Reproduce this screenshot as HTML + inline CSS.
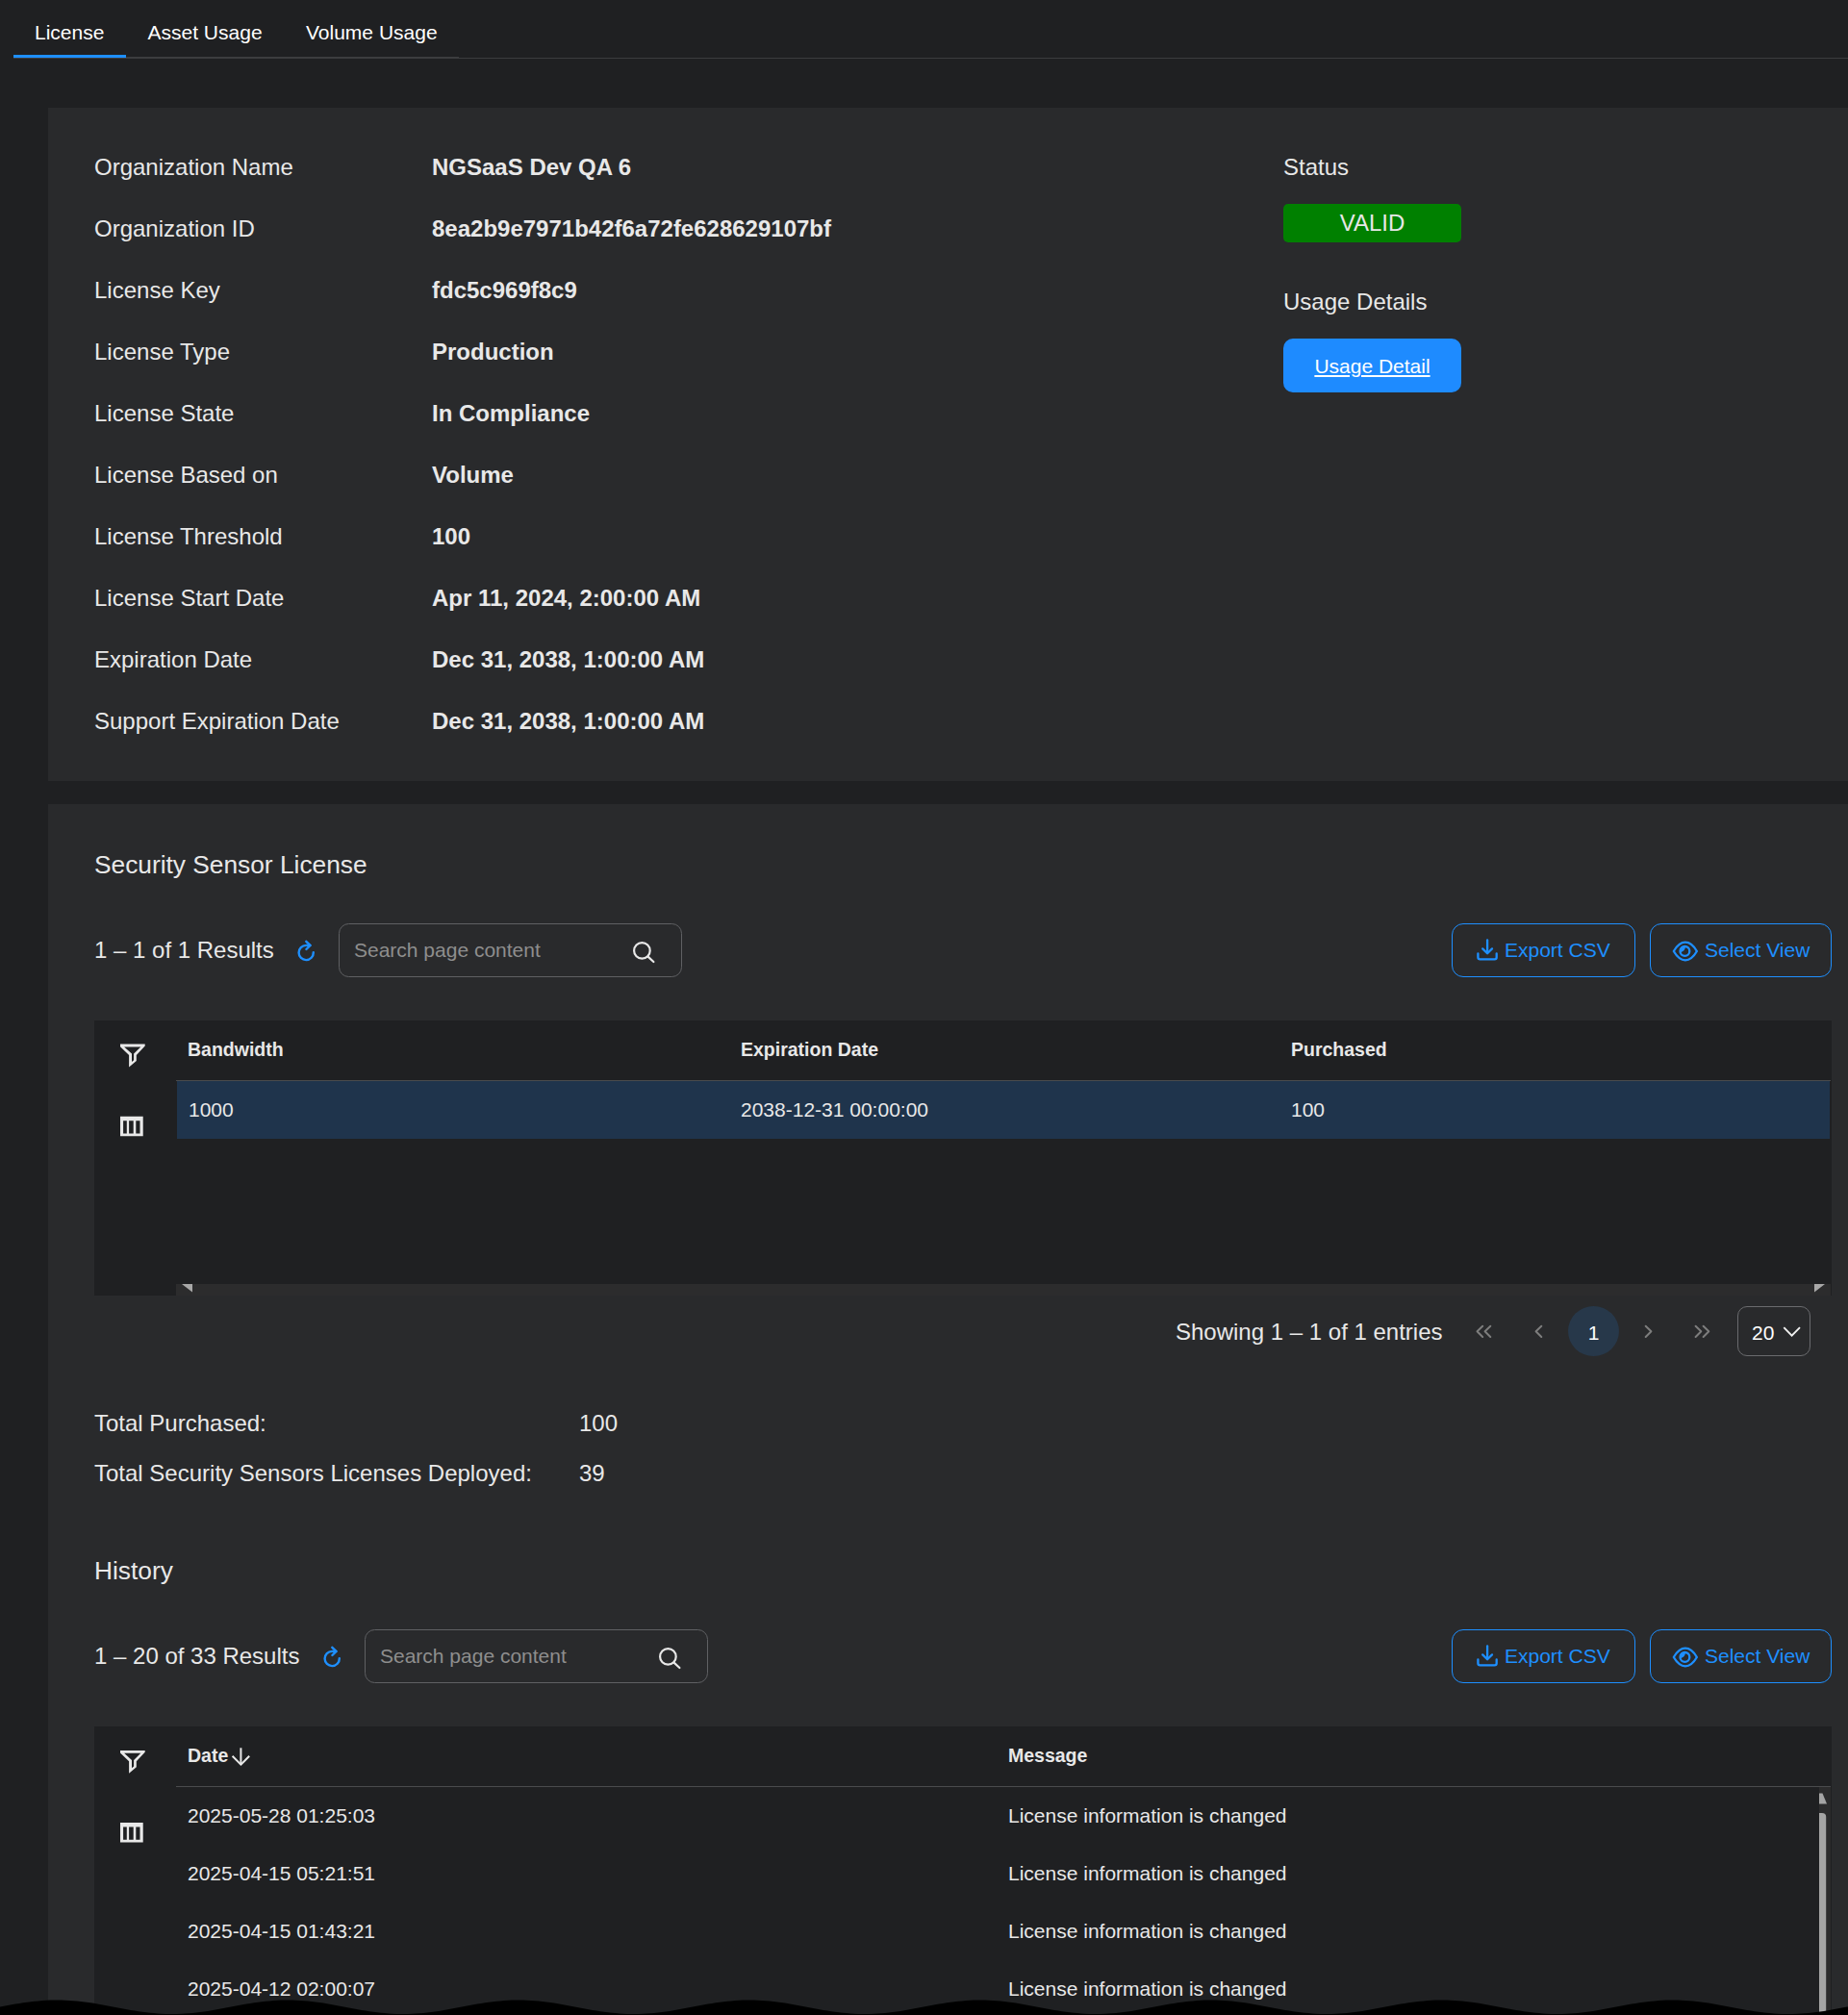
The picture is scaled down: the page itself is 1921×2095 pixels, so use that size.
<!DOCTYPE html>
<html><head><meta charset="utf-8">
<style>
*{box-sizing:border-box;margin:0;padding:0}
html,body{width:1921px;height:2095px;overflow:hidden;background:#1f2022;font-family:"Liberation Sans",sans-serif;color:#e6e6e6}
.abs{position:absolute}
.t{position:absolute;white-space:nowrap;line-height:1}
.tab{font-size:21px;color:#fff}
.card{position:absolute;background:#292a2c}
.lbl{font-size:24px;color:#e8e8e8}
.val{font-size:24px;font-weight:bold;color:#e8e8e8}
.h2{font-size:26.3px;color:#e8e8e8}
.res{font-size:24px;color:#e8e8e8}
.search{position:absolute;width:357px;height:56px;border:1.5px solid #5f6063;border-radius:10.5px}
.ph{position:absolute;font-size:21px;color:#8e8e8e;line-height:1;white-space:nowrap}
.btn{position:absolute;height:56px;border:1.8px solid #1e8fff;border-radius:12px}
.btxt{position:absolute;font-size:21px;color:#1e8fff;line-height:1;white-space:nowrap}
.tbl{position:absolute;background:#1f2022}
.th{font-size:19.5px;font-weight:bold;color:#e8e8e8}
.td{font-size:21px;color:#e8e8e8}
svg.ov{position:absolute;left:0;top:0}
</style></head><body>
<!-- tabs -->
<div class="t tab" style="left:36px;top:23px">License</div>
<div class="t tab" style="left:153.5px;top:23px">Asset Usage</div>
<div class="t tab" style="left:318px;top:23px">Volume Usage</div>
<div class="abs" style="left:14px;top:59px;width:463px;height:2px;background:#3c3d3f"></div>
<div class="abs" style="left:477px;top:60px;width:1444px;height:1px;background:#3c3d3f"></div>
<div class="abs" style="left:14px;top:57px;width:117px;height:3px;background:#1e8fff"></div>

<!-- card 1 -->
<div class="card" style="left:50px;top:112px;width:1871px;height:700px"></div>
<div class="t lbl" style="left:98px;top:162px">Organization Name</div>
<div class="t lbl" style="left:98px;top:226px">Organization ID</div>
<div class="t lbl" style="left:98px;top:290px">License Key</div>
<div class="t lbl" style="left:98px;top:354px">License Type</div>
<div class="t lbl" style="left:98px;top:418px">License State</div>
<div class="t lbl" style="left:98px;top:482px">License Based on</div>
<div class="t lbl" style="left:98px;top:546px">License Threshold</div>
<div class="t lbl" style="left:98px;top:610px">License Start Date</div>
<div class="t lbl" style="left:98px;top:674px">Expiration Date</div>
<div class="t lbl" style="left:98px;top:738px">Support Expiration Date</div>

<div class="t val" style="left:449px;top:162px">NGSaaS Dev QA 6</div>
<div class="t val" style="left:449px;top:226px">8ea2b9e7971b42f6a72fe628629107bf</div>
<div class="t val" style="left:449px;top:290px">fdc5c969f8c9</div>
<div class="t val" style="left:449px;top:354px">Production</div>
<div class="t val" style="left:449px;top:418px">In Compliance</div>
<div class="t val" style="left:449px;top:482px">Volume</div>
<div class="t val" style="left:449px;top:546px">100</div>
<div class="t val" style="left:449px;top:610px">Apr 11, 2024, 2:00:00 AM</div>
<div class="t val" style="left:449px;top:674px">Dec 31, 2038, 1:00:00 AM</div>
<div class="t val" style="left:449px;top:738px">Dec 31, 2038, 1:00:00 AM</div>

<div class="t lbl" style="left:1334px;top:162px">Status</div>
<div class="abs" style="left:1334px;top:212px;width:185px;height:40px;background:#008000;border-radius:5px"></div>
<div class="t lbl" style="left:1334px;top:220px;width:185px;text-align:center;color:#e8e8e8">VALID</div>
<div class="t lbl" style="left:1334px;top:302px">Usage Details</div>
<div class="abs" style="left:1334px;top:352px;width:185px;height:56px;background:#1e8bff;border-radius:10px"></div>
<div class="t tab" style="left:1334px;top:370px;width:185px;text-align:center;color:#fff;text-decoration:underline">Usage Detail</div>

<!-- card 2 -->
<div class="card" style="left:50px;top:836px;width:1871px;height:1259px"></div>
<div class="t h2" style="left:98px;top:886px">Security Sensor License</div>
<div class="t res" style="left:98px;top:976px">1 – 1 of 1 Results</div>
<div class="search" style="left:352px;top:960px"></div>
<div class="ph" style="left:368px;top:977px">Search page content</div>
<div class="btn" style="left:1509px;top:960px;width:191px"></div>
<div class="btn" style="left:1715px;top:960px;width:189px"></div>
<div class="btxt" style="left:1564px;top:977px">Export CSV</div>
<div class="btxt" style="left:1772px;top:977px">Select View</div>

<div class="tbl" style="left:98px;top:1061px;width:1806px;height:286px"></div>
<div class="abs" style="left:183px;top:1123px;width:1720px;height:1px;background:#4a4b4d"></div>
<div class="abs" style="left:184px;top:1124px;width:1718px;height:60px;background:#1f344c"></div>
<div class="t th" style="left:195px;top:1082px">Bandwidth</div>
<div class="t th" style="left:770px;top:1082px">Expiration Date</div>
<div class="t th" style="left:1342px;top:1082px">Purchased</div>
<div class="t td" style="left:196px;top:1143px">1000</div>
<div class="t td" style="left:770px;top:1143px">2038-12-31 00:00:00</div>
<div class="t td" style="left:1342px;top:1143px">100</div>
<div class="abs" style="left:183px;top:1335px;width:1720px;height:12px;background:#2c2c2d"></div>

<div class="t res" style="left:1222px;top:1373px">Showing 1 – 1 of 1 entries</div>
<div class="abs" style="left:1630px;top:1358px;width:53px;height:52px;border-radius:50%;background:#27384a"></div>
<div class="t tab" style="left:1630px;top:1375px;width:53px;text-align:center">1</div>
<div class="abs" style="left:1806px;top:1358px;width:76px;height:52px;border:1.5px solid #6a6b6e;border-radius:10px"></div>
<div class="t tab" style="left:1821px;top:1375px">20</div>

<div class="t res" style="left:98px;top:1468px">Total Purchased:</div>
<div class="t res" style="left:602px;top:1468px">100</div>
<div class="t res" style="left:98px;top:1520px">Total Security Sensors Licenses Deployed:</div>
<div class="t res" style="left:602px;top:1520px">39</div>

<div class="t h2" style="left:98px;top:1620px">History</div>
<div class="t res" style="left:98px;top:1710px">1 – 20 of 33 Results</div>
<div class="search" style="left:379px;top:1694px"></div>
<div class="ph" style="left:395px;top:1711px">Search page content</div>
<div class="btn" style="left:1509px;top:1694px;width:191px"></div>
<div class="btn" style="left:1715px;top:1694px;width:189px"></div>
<div class="btxt" style="left:1564px;top:1711px">Export CSV</div>
<div class="btxt" style="left:1772px;top:1711px">Select View</div>

<div class="tbl" style="left:98px;top:1795px;width:1806px;height:300px"></div>
<div class="abs" style="left:183px;top:1857px;width:1720px;height:1px;background:#4a4b4d"></div>
<div class="t th" style="left:195px;top:1816px">Date</div>
<div class="t th" style="left:1048px;top:1816px">Message</div>
<div class="t td" style="left:195px;top:1877px">2025-05-28 01:25:03</div>
<div class="t td" style="left:195px;top:1937px">2025-04-15 05:21:51</div>
<div class="t td" style="left:195px;top:1997px">2025-04-15 01:43:21</div>
<div class="t td" style="left:195px;top:2057px">2025-04-12 02:00:07</div>
<div class="t td" style="left:1048px;top:1877px">License information is changed</div>
<div class="t td" style="left:1048px;top:1937px">License information is changed</div>
<div class="t td" style="left:1048px;top:1997px">License information is changed</div>
<div class="t td" style="left:1048px;top:2057px">License information is changed</div>
<div class="abs" style="left:1891px;top:1858px;width:12px;height:237px;background:#2c2c2d"></div>

<svg class="ov" width="1921" height="2095" viewBox="0 0 1921 2095">
<defs>
<g id="refresh" fill="none" stroke="#1e8fff" stroke-width="2.4" stroke-linecap="round" stroke-linejoin="round">
  <path d="M325.8,990.3 A7.6,7.6 0 1 1 318.2,982.9 L322.4,982.9"/>
  <path d="M318.3,978.8 L322.5,982.9 L318.4,987"/>
</g>
<g id="search" fill="none" stroke="#e8e8e8" stroke-width="2.2" stroke-linecap="round">
  <circle cx="667.4" cy="988.4" r="8.3"/>
  <path d="M673.6,994.6 L679.4,1000"/>
</g>
<g id="dl" fill="none" stroke="#1e8fff" stroke-width="2.3" stroke-linecap="round" stroke-linejoin="round">
  <path d="M1546.1,977.5 V991"/>
  <path d="M1541.2,986.4 L1546.1,991.2 L1551,986.4"/>
  <path d="M1536.4,991.4 V995.3 Q1536.4,997.4 1538.5,997.4 H1553.6 Q1555.7,997.4 1555.7,995.3 V991.4"/>
</g>
<g id="eye" fill="none" stroke="#1e8fff" stroke-width="2.3" stroke-linejoin="round">
  <path d="M1739.8,989 Q1745.3,979.7 1751.9,979.7 Q1758.5,979.7 1763.9,989 Q1758.5,998.3 1751.9,998.3 Q1745.3,998.3 1739.8,989 Z"/>
  <circle cx="1751.4" cy="988.9" r="4.9"/>
  <path d="M1747.2,989.3 Q1750.6,988.6 1751.2,985.2 L1751.2,984.6 Q1747,985 1746.9,989.3 Z" fill="#1e8fff" stroke-width="1.2"/>
</g>
<g id="filter" fill="#e8e8e8">
  <path fill-rule="evenodd" d="M125,1085.6 H150.7 V1087.4 L141.8,1097 V1103 L134.1,1109.4 V1097 L125,1088.3 Z M129.1,1088.4 H146.3 L139.1,1095.6 V1102.2 L137,1104 V1095.6 Z"/>
</g>
<g id="cols" fill="#e8e8e8">
  <path fill-rule="evenodd" d="M125,1160.7 H148.7 V1181.2 H125 Z M128.1,1165.3 V1178.4 H131.8 V1165.3 Z M134.1,1165.3 V1178.4 H138.7 V1165.3 Z M141.3,1165.3 V1178.4 H145.5 V1165.3 Z"/>
</g>
</defs>
<use href="#refresh"/>
<use href="#refresh" x="27" y="734"/>
<use href="#search"/>
<use href="#search" x="27" y="734"/>
<use href="#dl"/><use href="#dl" y="734"/>
<use href="#eye"/><use href="#eye" y="734"/>
<use href="#filter"/><use href="#filter" y="734.3"/>
<use href="#cols"/><use href="#cols" y="734.3"/>
<!-- hscroll arrows -->
<path d="M189,1335 H200 V1343.5 Z" fill="#a8a8a8"/>
<path d="M1897,1335 H1886 V1343.5 Z" fill="#a8a8a8"/>
<!-- vscroll -->
<path d="M1891,1864.5 L1894.5,1864.5 L1899,1875.5 L1891,1875.5 Z" fill="#a5a5a5"/>
<path d="M1891,1885 H1894 Q1898.2,1885 1898.2,1889 V2095 H1891 Z" fill="#a5a5a5"/>
<!-- pagination chevrons -->
<g fill="none" stroke="#7d7d7d" stroke-width="2" stroke-linecap="round" stroke-linejoin="round">
  <path d="M1541.2,1378.8 L1535.5,1384.3 L1541.2,1390"/>
  <path d="M1549.3,1378.8 L1543.6,1384.3 L1549.3,1390"/>
  <path d="M1602.3,1378.8 L1596.6,1384.3 L1602.3,1390"/>
  <path d="M1710.7,1378.8 L1716.4,1384.3 L1710.7,1390"/>
  <path d="M1762.6,1378.8 L1768.3,1384.3 L1762.6,1390"/>
  <path d="M1770.6,1378.8 L1776.3,1384.3 L1770.6,1390"/>
</g>
<path d="M1854.3,1380.2 L1862.6,1388.6 L1871,1380.2" fill="none" stroke="#f0f0f0" stroke-width="1.9"/>
<!-- sort arrow -->
<g fill="none" stroke="#e8e8e8" stroke-width="2">
  <path d="M250.4,1817.3 V1834.6"/>
  <path d="M241.6,1825.8 L250.4,1834.6 L259.2,1825.8"/>
</g>
<path d="M0,2095 L0,2086.6 L4,2085.8 L8,2085.1 L12,2084.3 L16,2083.6 L20,2083.0 L24,2082.3 L28,2081.8 L32,2081.2 L36,2080.8 L40,2080.4 L44,2080.1 L48,2079.8 L52,2079.6 L56,2079.5 L60,2079.5 L64,2079.6 L68,2079.7 L72,2079.9 L76,2080.2 L80,2080.6 L84,2081.0 L88,2081.5 L92,2082.0 L96,2082.6 L100,2083.3 L104,2084.0 L108,2084.7 L112,2085.4 L116,2086.2 L120,2086.9 L124,2087.7 L128,2088.4 L132,2089.2 L136,2089.9 L140,2090.5 L144,2091.2 L148,2091.7 L152,2092.3 L156,2092.7 L160,2093.1 L164,2093.4 L168,2093.7 L172,2093.9 L176,2094.0 L180,2094.0 L184,2093.9 L188,2093.8 L192,2093.6 L196,2093.3 L200,2092.9 L204,2092.5 L208,2092.0 L212,2091.5 L216,2090.9 L220,2090.2 L224,2089.5 L228,2088.8 L232,2088.1 L236,2087.3 L240,2086.6 L244,2085.8 L248,2085.1 L252,2084.3 L256,2083.6 L260,2083.0 L264,2082.3 L268,2081.8 L272,2081.2 L276,2080.8 L280,2080.4 L284,2080.1 L288,2079.8 L292,2079.6 L296,2079.5 L300,2079.5 L304,2079.6 L308,2079.7 L312,2079.9 L316,2080.2 L320,2080.6 L324,2081.0 L328,2081.5 L332,2082.0 L336,2082.6 L340,2083.3 L344,2084.0 L348,2084.7 L352,2085.4 L356,2086.2 L360,2086.9 L364,2087.7 L368,2088.4 L372,2089.2 L376,2089.9 L380,2090.5 L384,2091.2 L388,2091.7 L392,2092.3 L396,2092.7 L400,2093.1 L404,2093.4 L408,2093.7 L412,2093.9 L416,2094.0 L420,2094.0 L424,2093.9 L428,2093.8 L432,2093.6 L436,2093.3 L440,2092.9 L444,2092.5 L448,2092.0 L452,2091.5 L456,2090.9 L460,2090.2 L464,2089.5 L468,2088.8 L472,2088.1 L476,2087.3 L480,2086.6 L484,2085.8 L488,2085.1 L492,2084.3 L496,2083.6 L500,2083.0 L504,2082.3 L508,2081.8 L512,2081.2 L516,2080.8 L520,2080.4 L524,2080.1 L528,2079.8 L532,2079.6 L536,2079.5 L540,2079.5 L544,2079.6 L548,2079.7 L552,2079.9 L556,2080.2 L560,2080.6 L564,2081.0 L568,2081.5 L572,2082.0 L576,2082.6 L580,2083.3 L584,2084.0 L588,2084.7 L592,2085.4 L596,2086.2 L600,2086.9 L604,2087.7 L608,2088.4 L612,2089.2 L616,2089.9 L620,2090.5 L624,2091.2 L628,2091.7 L632,2092.3 L636,2092.7 L640,2093.1 L644,2093.4 L648,2093.7 L652,2093.9 L656,2094.0 L660,2094.0 L664,2093.9 L668,2093.8 L672,2093.6 L676,2093.3 L680,2092.9 L684,2092.5 L688,2092.0 L692,2091.5 L696,2090.9 L700,2090.2 L704,2089.5 L708,2088.8 L712,2088.1 L716,2087.3 L720,2086.6 L724,2085.8 L728,2085.1 L732,2084.3 L736,2083.6 L740,2083.0 L744,2082.3 L748,2081.8 L752,2081.2 L756,2080.8 L760,2080.4 L764,2080.1 L768,2079.8 L772,2079.6 L776,2079.5 L780,2079.5 L784,2079.6 L788,2079.7 L792,2079.9 L796,2080.2 L800,2080.6 L804,2081.0 L808,2081.5 L812,2082.0 L816,2082.6 L820,2083.3 L824,2084.0 L828,2084.7 L832,2085.4 L836,2086.2 L840,2086.9 L844,2087.7 L848,2088.4 L852,2089.2 L856,2089.9 L860,2090.5 L864,2091.2 L868,2091.7 L872,2092.3 L876,2092.7 L880,2093.1 L884,2093.4 L888,2093.7 L892,2093.9 L896,2094.0 L900,2094.0 L904,2093.9 L908,2093.8 L912,2093.6 L916,2093.3 L920,2092.9 L924,2092.5 L928,2092.0 L932,2091.5 L936,2090.9 L940,2090.2 L944,2089.5 L948,2088.8 L952,2088.1 L956,2087.3 L960,2086.6 L964,2085.8 L968,2085.1 L972,2084.3 L976,2083.6 L980,2083.0 L984,2082.3 L988,2081.8 L992,2081.2 L996,2080.8 L1000,2080.4 L1004,2080.1 L1008,2079.8 L1012,2079.6 L1016,2079.5 L1020,2079.5 L1024,2079.6 L1028,2079.7 L1032,2079.9 L1036,2080.2 L1040,2080.6 L1044,2081.0 L1048,2081.5 L1052,2082.0 L1056,2082.6 L1060,2083.3 L1064,2084.0 L1068,2084.7 L1072,2085.4 L1076,2086.2 L1080,2086.9 L1084,2087.7 L1088,2088.4 L1092,2089.2 L1096,2089.9 L1100,2090.5 L1104,2091.2 L1108,2091.7 L1112,2092.3 L1116,2092.7 L1120,2093.1 L1124,2093.4 L1128,2093.7 L1132,2093.9 L1136,2094.0 L1140,2094.0 L1144,2093.9 L1148,2093.8 L1152,2093.6 L1156,2093.3 L1160,2092.9 L1164,2092.5 L1168,2092.0 L1172,2091.5 L1176,2090.9 L1180,2090.2 L1184,2089.5 L1188,2088.8 L1192,2088.1 L1196,2087.3 L1200,2086.6 L1204,2085.8 L1208,2085.1 L1212,2084.3 L1216,2083.6 L1220,2083.0 L1224,2082.3 L1228,2081.8 L1232,2081.2 L1236,2080.8 L1240,2080.4 L1244,2080.1 L1248,2079.8 L1252,2079.6 L1256,2079.5 L1260,2079.5 L1264,2079.6 L1268,2079.7 L1272,2079.9 L1276,2080.2 L1280,2080.6 L1284,2081.0 L1288,2081.5 L1292,2082.0 L1296,2082.6 L1300,2083.3 L1304,2084.0 L1308,2084.7 L1312,2085.4 L1316,2086.2 L1320,2086.9 L1324,2087.7 L1328,2088.4 L1332,2089.2 L1336,2089.9 L1340,2090.5 L1344,2091.2 L1348,2091.7 L1352,2092.3 L1356,2092.7 L1360,2093.1 L1364,2093.4 L1368,2093.7 L1372,2093.9 L1376,2094.0 L1380,2094.0 L1384,2093.9 L1388,2093.8 L1392,2093.6 L1396,2093.3 L1400,2092.9 L1404,2092.5 L1408,2092.0 L1412,2091.5 L1416,2090.9 L1420,2090.2 L1424,2089.5 L1428,2088.8 L1432,2088.1 L1436,2087.3 L1440,2086.6 L1444,2085.8 L1448,2085.1 L1452,2084.3 L1456,2083.6 L1460,2083.0 L1464,2082.3 L1468,2081.8 L1472,2081.2 L1476,2080.8 L1480,2080.4 L1484,2080.1 L1488,2079.8 L1492,2079.6 L1496,2079.5 L1500,2079.5 L1504,2079.6 L1508,2079.7 L1512,2079.9 L1516,2080.2 L1520,2080.6 L1524,2081.0 L1528,2081.5 L1532,2082.0 L1536,2082.6 L1540,2083.3 L1544,2084.0 L1548,2084.7 L1552,2085.4 L1556,2086.2 L1560,2086.9 L1564,2087.7 L1568,2088.4 L1572,2089.2 L1576,2089.9 L1580,2090.5 L1584,2091.2 L1588,2091.7 L1592,2092.3 L1596,2092.7 L1600,2093.1 L1604,2093.4 L1608,2093.7 L1612,2093.9 L1616,2094.0 L1620,2094.0 L1624,2093.9 L1628,2093.8 L1632,2093.6 L1636,2093.3 L1640,2092.9 L1644,2092.5 L1648,2092.0 L1652,2091.5 L1656,2090.9 L1660,2090.2 L1664,2089.5 L1668,2088.8 L1672,2088.1 L1676,2087.3 L1680,2086.6 L1684,2085.8 L1688,2085.1 L1692,2084.3 L1696,2083.6 L1700,2083.0 L1704,2082.3 L1708,2081.8 L1712,2081.2 L1716,2080.8 L1720,2080.4 L1724,2080.1 L1728,2079.8 L1732,2079.6 L1736,2079.5 L1740,2079.5 L1744,2079.6 L1748,2079.7 L1752,2079.9 L1756,2080.2 L1760,2080.6 L1764,2081.0 L1768,2081.5 L1772,2082.0 L1776,2082.6 L1780,2083.3 L1784,2084.0 L1788,2084.7 L1792,2085.4 L1796,2086.2 L1800,2086.9 L1804,2087.7 L1808,2088.4 L1812,2089.2 L1816,2089.9 L1820,2090.5 L1824,2091.2 L1828,2091.7 L1832,2092.3 L1836,2092.7 L1840,2093.1 L1844,2093.4 L1848,2093.7 L1852,2093.9 L1856,2094.0 L1860,2094.0 L1864,2093.9 L1868,2093.8 L1872,2093.6 L1876,2093.3 L1880,2092.9 L1884,2092.5 L1888,2092.0 L1892,2091.5 L1896,2090.9 L1900,2090.2 L1904,2089.5 L1908,2088.8 L1912,2088.1 L1916,2087.3 L1920,2086.6 L1921,2086.4 L1921,2095 Z" fill="#000"/>
</svg>
</body></html>
